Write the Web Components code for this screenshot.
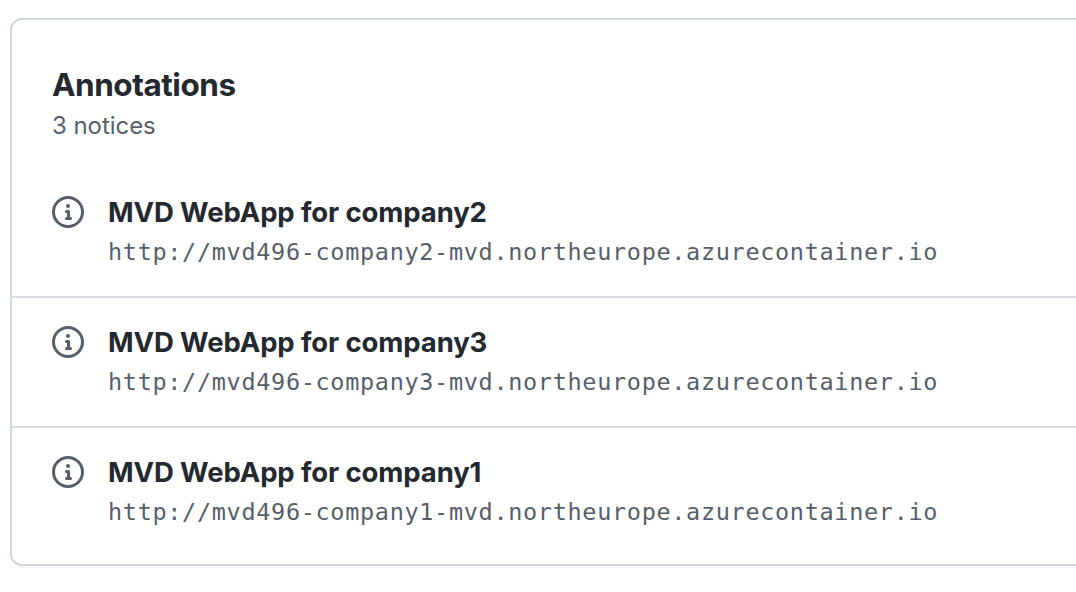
<!DOCTYPE html>
<html lang="en"><head><meta charset="utf-8"><title>Annotations</title>
<style>html,body{margin:0;background:#fff}body{width:1076px;height:592px;overflow:hidden;font-family:Inter,"Liberation Sans",sans-serif;color:#24292f}</style></head>
<body>
<annotation-panel>
<span slot="title">Annotations</span><span slot="count">3 notices</span>
<annotation-item><span slot="title">MVD WebApp for company2</span><span slot="message">http://mvd496-company2-mvd.northeurope.azurecontainer.io</span></annotation-item>
<annotation-item><span slot="title">MVD WebApp for company3</span><span slot="message">http://mvd496-company3-mvd.northeurope.azurecontainer.io</span></annotation-item>
<annotation-item><span slot="title">MVD WebApp for company1</span><span slot="message">http://mvd496-company1-mvd.northeurope.azurecontainer.io</span></annotation-item>
</annotation-panel>
<script>
const define=(name,html)=>customElements.define(name,class extends HTMLElement{constructor(){super();this.attachShadow({mode:'open'}).innerHTML=html;}});
define('info-icon',`<style>:host{display:block;width:32px;height:32px;color:#57606a}svg{display:block}</style>
<svg width="32" height="32" viewBox="0 0 16 16" fill="currentColor"><path d="M0 8a8 8 0 1 1 16 0A8 8 0 0 1 0 8Zm8-6.5a6.5 6.5 0 1 0 0 13 6.5 6.5 0 0 0 0-13ZM6.5 7.75A.75.75 0 0 1 7.25 7h1a.75.75 0 0 1 .75.75v2.75h.25a.75.75 0 0 1 0 1.5h-2a.75.75 0 0 1 0-1.5h.25v-2h-.25a.75.75 0 0 1-.75-.75ZM8 6a1 1 0 1 1 0-2 1 1 0 0 1 0 2Z"/></svg>`);
define('annotation-item',`<style>:host{display:flex;gap:24px;box-sizing:border-box;height:130px;padding:28px 40px 0;border-bottom:2px solid #d8dee4}
:host(:last-of-type){border-bottom:0}
info-icon{flex:none}.body{display:flex;flex-direction:column;white-space:nowrap}
h3{margin:0;font-size:27.5px;font-weight:650;line-height:33px;letter-spacing:-.11px}
.msg{margin-top:7px;font:23.5px/32px "DejaVu Sans Mono",monospace;letter-spacing:.675px;color:#57606a}</style>
<info-icon></info-icon><div class="body"><h3><slot name="title"></slot></h3><div class="msg"><slot name="message"></slot></div></div>`);
define('annotation-panel',`<style>:host{display:block;box-sizing:border-box;width:1100px;height:548px;margin:18px 0 0 10px;border:2px solid #d0d7de;border-radius:12px;overflow:hidden;box-shadow:0 2px 0 rgba(27,31,36,.04)}
header{box-sizing:border-box;height:148px;padding:44px 40px 0}
h2{margin:0;font-size:31.5px;font-weight:650;line-height:41px;letter-spacing:-.46px}
.count{font-size:24px;line-height:42px;color:#57606a;letter-spacing:-.05px}</style>
<header><h2><slot name="title"></slot></h2><div class="count"><slot name="count"></slot></div></header><slot></slot>`);
</script></body></html>
